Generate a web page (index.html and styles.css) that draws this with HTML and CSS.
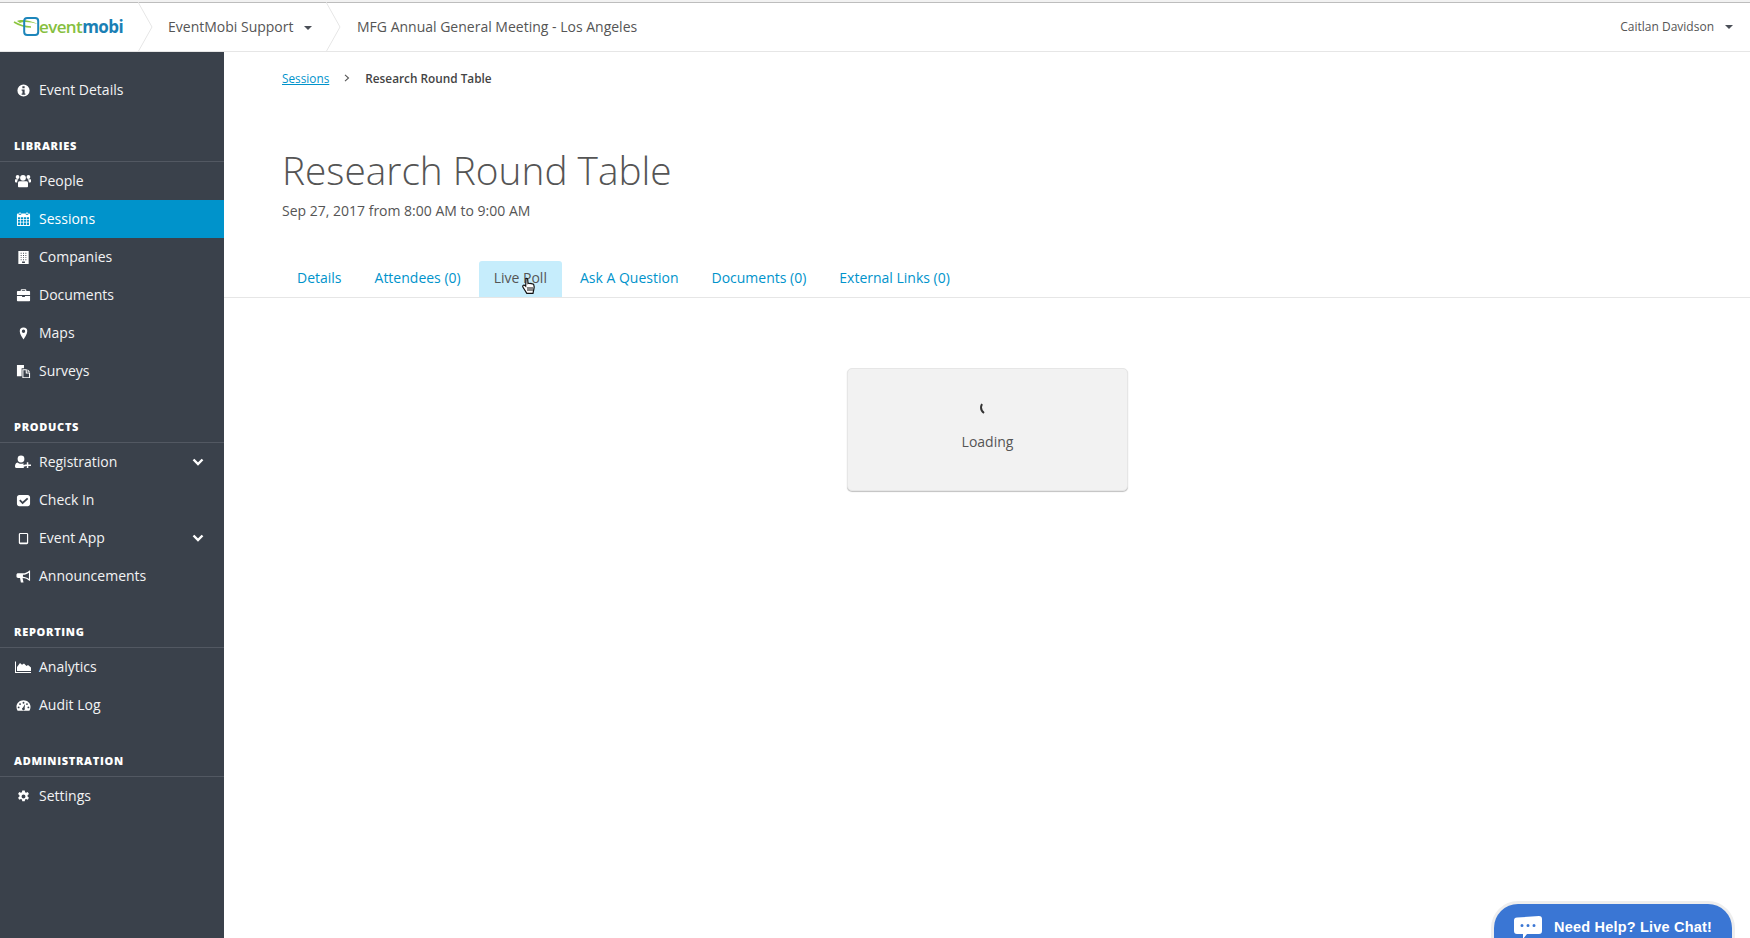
FILE: index.html
```html
<!DOCTYPE html>
<html lang="en">
<head>
<meta charset="utf-8">
<title>Research Round Table</title>
<link rel="stylesheet" href="styles.css">
</head>
<body>
<header class="topbar">
  <a class="logo">
    <svg class="logo-mark" viewBox="0 0 28 22" width="28" height="22"><path d="M1 6c5 3 11 5 17 5" fill="none" stroke="#8cc63f" stroke-width="1.6"/><path d="M4 5c4-2 12-1 21 3-7-2-14-3-18-1z" fill="#8cc63f"/><rect x="11.2" y="2" width="14" height="17" rx="3" fill="none" stroke="#1d86bb" stroke-width="2"/></svg>
    <span class="logo-text"><span class="logo-green">event</span><span class="logo-blue">mobi</span></span>
  </a>
  <svg class="crumb-sep" viewBox="0 0 15 50" width="15" height="50"><path d="M0 0l14 25L0 50" fill="none" stroke="#e6e6e6"/></svg>
  <div class="org">EventMobi Support<span class="caret"></span></div>
  <svg class="crumb-sep" viewBox="0 0 15 50" width="15" height="50"><path d="M0 0l14 25L0 50" fill="none" stroke="#e6e6e6"/></svg>
  <div class="event-name">MFG Annual General Meeting - Los Angeles</div>
  <div class="user">Caitlan Davidson<span class="caret caret-small"></span></div>
</header>
<div class="shell">
  <nav class="sidebar">
    <a class="nav-item"><svg class="ico" viewBox="0 0 16 16"><path fill-rule="evenodd" d="M8 1.500a6.500 6.500 0 1 1 0 13 6.500 6.500 0 0 1 0-13zM6.800 3.500v2h2.400v-2zM6 7v1.300h.9v2.900H6v1.300h4v-1.300h-.8V7z"/></svg><span class="nav-label">Event Details</span></a>

    <div class="nav-head">Libraries</div>
    <a class="nav-item"><svg class="ico ico-wide" viewBox="0 0 16 16"><circle cx="8" cy="4.800" r="2.900"/><circle cx="2.600" cy="4" r="1.900"/><circle cx="13.400" cy="4" r="1.900"/><path d="M4.400 8.200h7.200c1 0 1.400.9 1.400 2v3c0 .6-.5 1.100-1.100 1.100H4.100c-.6 0-1.100-.5-1.100-1.100v-3c0-1.100.4-2 1.400-2zM.3 6.300h3.200c-.8.700-1.300 1.500-1.300 3.200H1c-.6 0-1-.3-1-.8V7c0-.4.100-.7.300-.7zM15.700 6.300h-3.200c.8.700 1.300 1.500 1.300 3.200H15c.6 0 1-.3 1-.8V7c0-.4-.1-.7-.3-.7z"/></svg><span class="nav-label">People</span></a>
    <a class="nav-item is-active"><svg class="ico" viewBox="0 0 16 16"><path fill-rule="evenodd" d="M3.500 .5h1.500v2h-1.500zM11 .5h1.500v2H11zM2 1.700h1v1.600h2.500V1.700h5v1.600H13V1.700h1c.6 0 1 .4 1 1V14c0 .6-.4 1-1 1H2c-.6 0-1-.4-1-1V2.700c0-.6.400-1 1-1zM2.100 5.500v2.100h2.400V5.500zm3.200 0v2.100h2.300V5.500zm3.100 0v2.100h2.300V5.500zm3.100 0v2.100h2.400V5.500zM2.100 8.400v2.100h2.400V8.400zm3.200 0v2.100h2.300V8.400zm3.100 0v2.100h2.300V8.400zm3.100 0v2.100h2.400V8.400zM2.100 11.300v2.600h2.400v-2.600zm3.200 0v2.600h2.300v-2.600zm3.100 0v2.600h2.300v-2.600zm3.100 0v2.600h2.400v-2.600z"/></svg><span class="nav-label">Sessions</span></a>
    <a class="nav-item"><svg class="ico" viewBox="0 0 16 16"><path fill-rule="evenodd" d="M2.500 1h11v14h-11zM5 3v1h1V3zm2.500 0v1h1V3zM10 3v1h1V3zM5 5.300v1h1v-1zm2.500 0v1h1v-1zm2.500 0v1h1v-1zM5 7.600v1h1v-1zm2.500 0v1h1v-1zm2.500 0v1h1v-1zM5 9.900v1h1v-1zm2.500 0v1h1v-1zm2.500 0v1h1v-1zM6.500 12.300v1.500h3v-1.500z"/></svg><span class="nav-label">Companies</span></a>
    <a class="nav-item"><svg class="ico" viewBox="0 0 16 16"><path fill-rule="evenodd" d="M5 3.200V2.300c0-.6.400-1 1-1h4c.6 0 1 .4 1 1v.9h3.200c.5 0 .8.300.8.800v3.500H1V4c0-.5.300-.8.800-.8zm1.200 0h3.600v-.8H6.200zM1 8.500h5.500v1.200h3V8.500H15v4.700c0 .5-.3.800-.8.800H1.800c-.5 0-.8-.3-.8-.8z"/></svg><span class="nav-label">Documents</span></a>
    <a class="nav-item"><svg class="ico" viewBox="0 0 16 16"><path fill-rule="evenodd" d="M8 1.500a4 4 0 0 1 4 4c0 3-2.700 6.500-4 9-1.300-2.500-4-6-4-9a4 4 0 0 1 4-4zm0 2.300a1.800 1.800 0 1 0 0 3.600 1.800 1.800 0 0 0 0-3.600z"/></svg><span class="nav-label">Maps</span></a>
    <a class="nav-item"><svg class="ico" viewBox="0 0 16 16"><path fill-rule="evenodd" d="M1 1h7.500v3.500H6V13H1zM6.800 5.500h4.700V9H15v6H6.800zM12.300 5.500 15 8.200h-2.700zM7.900 6.600V14h6V10h-3.500V6.600z"/></svg><span class="nav-label">Surveys</span></a>

    <div class="nav-head">Products</div>
    <a class="nav-item"><svg class="ico ico-wide" viewBox="0 0 16 16"><circle cx="6" cy="5" r="3.400"/><path d="M2.500 8.500c1 .8 2.200 1.300 3.500 1.300 1 0 1.800-.2 2.500-.6v1.700h2v1.500H8.800V14H1.300C.5 14 0 13.500 0 12.800c0-2 .6-4 2.500-4.300zM11.800 8.300h1.500v2.100H16v1.500h-2.700V14h-1.500v-2.100H9.500v-1.500h2.300z"/></svg><span class="nav-label">Registration</span><svg class="chev" viewBox="0 0 12 8" width="12" height="8"><path d="M1.500 1.500 6 6l4.500-4.500" fill="none" stroke="#fff" stroke-width="2.400"/></svg></a>
    <a class="nav-item"><svg class="ico" viewBox="0 0 16 16"><path fill-rule="evenodd" d="M3.500 2h9C13.900 2 15 3.100 15 4.500v7c0 1.400-1.100 2.500-2.500 2.500h-9C2.100 14 1 12.900 1 11.500v-7C1 3.100 2.100 2 3.500 2zm8.300 3L7 9.200 4.700 7l-1.300 1.300L7 11.900l6.100-5.600z"/></svg><span class="nav-label">Check In</span></a>
    <a class="nav-item"><svg class="ico" viewBox="0 0 16 16"><path fill-rule="evenodd" d="M4.500 2h7c.8 0 1.500.7 1.500 1.500v9c0 .8-.7 1.500-1.500 1.500h-7c-.8 0-1.500-.7-1.500-1.500v-9C3 2.700 3.700 2 4.500 2zm-.2 1.300v8.900h7.400V3.300z"/></svg><span class="nav-label">Event App</span><svg class="chev" viewBox="0 0 12 8" width="12" height="8"><path d="M1.500 1.500 6 6l4.500-4.500" fill="none" stroke="#fff" stroke-width="2.400"/></svg></a>
    <a class="nav-item"><svg class="ico" viewBox="0 0 16 16"><path fill-rule="evenodd" d="M15 1.500v11h-.8C12.500 10.800 10 9.800 7 9.600l1 4.900H5.200L4.300 9.500H2.300c-1.100 0-1.800-.7-1.800-1.700V6.200c0-1 .7-1.700 1.800-1.700h4.700c3 0 5.500-1 7.200-3zm-1.200 2.400C12 5.100 9.700 6 7.400 6.200v2.100c2.300.2 4.600 1.100 6.400 2.300z"/></svg><span class="nav-label">Announcements</span></a>

    <div class="nav-head">Reporting</div>
    <a class="nav-item"><svg class="ico ico-wide" viewBox="0 0 16 16"><path d="M0 2.500h1v10.500h15v1H0z"/><path d="M2 12V8l3-4 2 1.700L9 4.500l2.500 2.500L13 6l3 2.500V12z"/></svg><span class="nav-label">Analytics</span></a>
    <a class="nav-item"><svg class="ico" viewBox="0 0 16 16"><path fill-rule="evenodd" d="M8 2.500c4 0 7.500 3 7.500 7 0 1.500-.5 2.800-1.200 4H1.700C1 12.300.5 11 .5 9.500c0-4 3.500-7 7.500-7zM8 4a1 1 0 1 0 0 2 1 1 0 0 0 0-2zM4.300 5.500a1 1 0 1 0 0 2 1 1 0 0 0 0-2zm7.400 0a1 1 0 1 0 0 2 1 1 0 0 0 0-2zM2.800 9a1 1 0 1 0 0 2 1 1 0 0 0 0-2zm10.400 0a1 1 0 1 0 0 2 1 1 0 0 0 0-2zM9.700 6.500 7.500 10a1.500 1.500 0 1 0 1.700.6z"/></svg><span class="nav-label">Audit Log</span></a>

    <div class="nav-head">Administration</div>
    <a class="nav-item"><svg class="ico" viewBox="0 0 16 16"><path fill-rule="evenodd" d="M6.700 1.500h2.600l.4 1.900c.4.100.7.300 1 .5l1.800-.7 1.300 2.200-1.500 1.300c.1.400.1.800 0 1.200l1.500 1.300-1.300 2.200-1.800-.7c-.3.200-.6.400-1 .5l-.4 1.900H6.700l-.4-1.900c-.4-.1-.7-.3-1-.5l-1.800.7-1.300-2.200 1.500-1.300c-.1-.4-.1-.8 0-1.200L2.200 5.400l1.300-2.200 1.800.7c.3-.2.600-.4 1-.5zM8 5.900a2.100 2.100 0 1 0 0 4.200 2.100 2.100 0 0 0 0-4.200z"/></svg><span class="nav-label">Settings</span></a>
  </nav>
  <main class="content">
    <div class="breadcrumb"><a class="breadcrumb-link">Sessions</a><svg class="breadcrumb-sep" viewBox="0 0 6 8" width="6" height="8"><path d="M1 .8 4.500 4 1 7.200" fill="none" stroke="#555" stroke-width="1.100"/></svg><span class="breadcrumb-current">Research Round Table</span></div>
    <h1 class="title">Research Round Table</h1>
    <p class="date">Sep 27, 2017 from 8:00 AM to 9:00 AM</p>
    <div class="tabs">
      <a class="tab">Details</a>
      <a class="tab">Attendees (0)</a>
      <a class="tab is-hover">Live Poll<svg class="cursor" viewBox="0 0 16 18" width="16" height="18"><path d="M5 1.500c.7-.5 1.600 0 1.700.8l.3 4.200c.8-.4 1.500-.3 2 .1.700-.3 1.400-.2 1.900.3.700-.2 1.400 0 1.800.6.500 1 .5 3.500 0 5.500l-.7 3.300H5.800L2 10.200c-.5-.8-.3-1.700.4-2 .7-.3 1.400 0 2.300 1L5 2.600z" fill="#fff" stroke="#111" stroke-width="1.200"/><path d="M7 10v4M9 10v4M11 10v4" stroke="#111" stroke-width="1"/></svg></a>
      <a class="tab">Ask A Question</a>
      <a class="tab">Documents (0)</a>
      <a class="tab">External Links (0)</a>
    </div>
    <div class="loading-wrap">
      <div class="loading">
        <svg class="spinner" viewBox="0 0 8 12" width="8" height="12"><path d="M3 1C1.500 4 1.800 7.500 5 10" fill="none" stroke="#333" stroke-width="1.900"/></svg>
        <span>Loading</span>
      </div>
    </div>
  </main>
</div>
<a class="chat"><svg class="chat-ico" viewBox="0 0 30 24" width="30" height="24"><path fill-rule="evenodd" d="M4 1.500 26 0c2 0 3 1.200 3 3v12c0 1.800-1 3-3 3H14l-4 5v-5H4c-2 0-3-1.200-3-3V4.500c0-1.800 1-3 3-3zM9 8a1.500 1.500 0 1 0 0 3 1.500 1.500 0 0 0 0-3zm6 0a1.500 1.500 0 1 0 0 3 1.500 1.500 0 0 0 0-3zm6 0a1.500 1.500 0 1 0 0 3 1.500 1.500 0 0 0 0-3z" fill="#fff"/></svg><span class="chat-label">Need Help? Live Chat!</span></a>
</body>
</html>
```
FILE: styles.css
```css
* { box-sizing: border-box; }
html, body { height: 100%; }
body {
  margin: 0;
  height: 938px;
  overflow: hidden;
  display: flex;
  flex-direction: column;
  font-family: "Open Sans", sans-serif;
  font-size: 14px;
  color: #555;
  background: #fff;
}
.topbar {
  height: 52px;
  flex: none;
  display: flex;
  align-items: center;
  border-top: 2px solid #f2f2f2;
  border-bottom: 1px solid #e6e6e6;
  box-shadow: inset 0 1px 0 #bdbdbd;
}
.logo {
  width: 138px;
  flex: none;
  display: flex;
  align-items: center;
  padding-left: 13px;
  height: 100%;
}
.logo-mark { flex: none; margin-right: -2px; }
.logo-text { font-size: 17px; font-weight: 600; letter-spacing: -0.6px; line-height: 1; }
.logo-green { color: #86bf3f; }
.logo-blue { color: #1a80b5; font-weight: 700; }
.crumb-sep { flex: none; }
.org {
  margin-left: 15px;
  margin-right: 16px;
  width: 142px;
  flex: none;
  font-size: 14px;
  white-space: nowrap;
}
.caret {
  display: inline-block;
  margin-left: 10px;
  vertical-align: 2px;
  border-style: solid;
  border-width: 4px 4.500px 0;
  border-color: #4a4f57 transparent transparent;
}
.caret-small { margin-left: 11px; }
.event-name { margin-left: 16px; white-space: nowrap; }
.user { margin-left: auto; padding-right: 17px; font-size: 12px; white-space: nowrap; }
.shell { flex: 1; display: flex; min-height: 0; }
.sidebar {
  width: 224px;
  flex: none;
  background: #3a414b;
  padding-top: 19px;
}
.nav-item {
  height: 38px;
  display: flex;
  align-items: center;
  padding-left: 15px;
  color: #f2f3f4;
  font-size: 14px;
}
.nav-label { padding-bottom: 2px; }
.nav-item.is-active { background: #0093cb; color: #fff; }
.ico { width: 15px; height: 15px; fill: #fff; flex: none; margin: 0 8px 0 1px; }
.ico-wide { width: 16px; height: 16px; margin: 0 8px 0 0; }
.chev { margin-left: auto; margin-right: 20px; }
.nav-head {
  height: 53px;
  display: flex;
  align-items: flex-end;
  padding: 0 14px 8px;
  border-bottom: 1px solid #525862;
  color: #fff;
  font-size: 11px;
  font-weight: 800;
  letter-spacing: 0.7px;
  text-transform: uppercase;
}
.content { flex: 1; min-width: 0; padding-top: 16px; }
.breadcrumb {
  display: flex;
  align-items: center;
  margin-left: 58px;
  font-size: 11.800px;
  line-height: 20px;
}
.breadcrumb-link { color: #0093cb; text-decoration: underline; }
.breadcrumb-sep { margin: 0 15px 0 15px; }
.breadcrumb-current { font-weight: 600; color: #444; }
.title {
  margin: 55px 0 0 58px;
  font-size: 38.800px;
  font-weight: 300;
  line-height: 54px;
  color: #555;
}
.date { margin: 4px 0 0 58px; font-size: 14px; line-height: 20px; }
.tabs {
  display: flex;
  gap: 3px;
  margin-top: 40px;
  padding-left: 58px;
  height: 37px;
  border-bottom: 1px solid #e6e6e6;
}
.tab {
  position: relative;
  height: 36px;
  padding: 0 15px 4px;
  display: flex;
  align-items: center;
  color: #0093cb;
  font-size: 14px;
  border-radius: 3px 3px 0 0;
}
.tab.is-hover { background: #c6edfc; color: #555; }
.cursor { position: absolute; left: 42px; top: 16px; }
.loading-wrap { display: flex; justify-content: center; padding: 70px 0 0 1px; }
.loading {
  width: 281px;
  height: 123px;
  background: #f2f2f2;
  border-radius: 5px;
  border: 1px solid #e6e6e6;
  box-shadow: 0 1px 1px rgba(0,0,0,.25);
  display: flex;
  flex-direction: column;
  align-items: center;
  padding-top: 34px;
}
.spinner { margin-bottom: 17px; margin-left: -9px; }
.chat {
  position: absolute;
  left: 1494px;
  bottom: 0;
  width: 238px;
  height: 34px;
  overflow: hidden;
  display: flex;
  align-items: flex-start;
  padding: 12px 0 0 19px;
  background: #3a76d4;
  border-radius: 24px 24px 0 0;
  box-shadow: 0 0 0 3px #eee;
  color: #fff;
  font-family: "Liberation Sans", sans-serif;
  font-weight: 700;
  font-size: 14.500px;
  letter-spacing: 0.2px;
  line-height: 20px;
}
.chat-label { padding-top: 1px; }
.chat-ico { margin-right: 11px; flex: none; }
```
